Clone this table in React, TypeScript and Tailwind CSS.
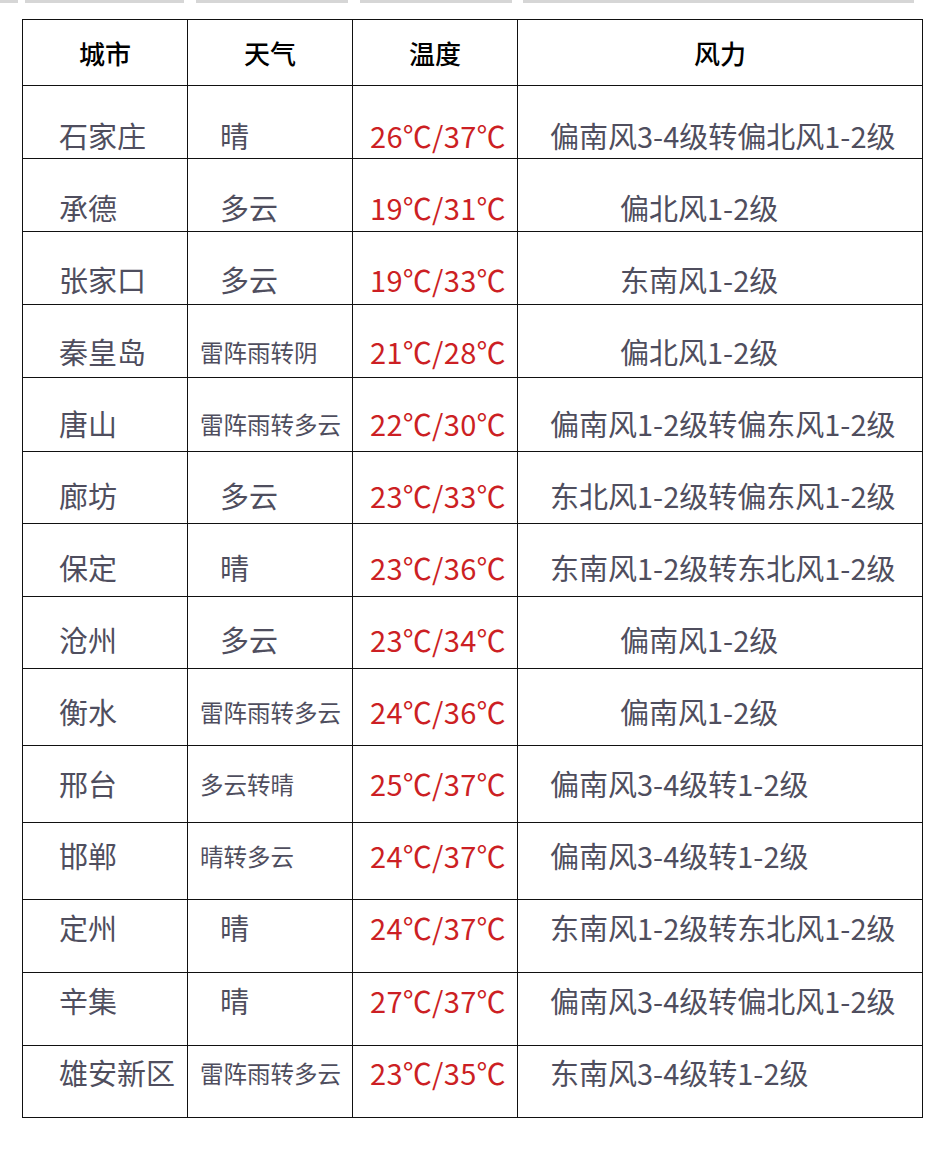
const rows = [
  { city: '石家庄', weather: '晴', temp: '26℃/37℃', wind: '偏南风3-4级转偏北风1-2级', h: 'h-[73px]', pt: 'pt-[35px]' },
  { city: '承德', weather: '多云', temp: '19℃/31℃', wind: '偏北风1-2级', h: 'h-[73px]', pt: 'pt-[34px]' },
  { city: '张家口', weather: '多云', temp: '19℃/33℃', wind: '东南风1-2级', h: 'h-[73px]', pt: 'pt-[33px]' },
  { city: '秦皇岛', weather: '雷阵雨转阴', temp: '21℃/28℃', wind: '偏北风1-2级', h: 'h-[73px]', pt: 'pt-[32px]' },
  { city: '唐山', weather: '雷阵雨转多云', temp: '22℃/30℃', wind: '偏南风1-2级转偏东风1-2级', h: 'h-[74px]', pt: 'pt-[31px]' },
  { city: '廊坊', weather: '多云', temp: '23℃/33℃', wind: '东北风1-2级转偏东风1-2级', h: 'h-[72px]', pt: 'pt-[29px]' },
  { city: '保定', weather: '晴', temp: '23℃/36℃', wind: '东南风1-2级转东北风1-2级', h: 'h-[73px]', pt: 'pt-[29px]' },
  { city: '沧州', weather: '多云', temp: '23℃/34℃', wind: '偏南风1-2级', h: 'h-[72px]', pt: 'pt-[28px]' },
  { city: '衡水', weather: '雷阵雨转多云', temp: '24℃/36℃', wind: '偏南风1-2级', h: 'h-[77px]', pt: 'pt-[28px]' },
  { city: '邢台', weather: '多云转晴', temp: '25℃/37℃', wind: '偏南风3-4级转1-2级', h: 'h-[77px]', pt: 'pt-[23px]' },
  { city: '邯郸', weather: '晴转多云', temp: '24℃/37℃', wind: '偏南风3-4级转1-2级', h: 'h-[77px]', pt: 'pt-[18px]' },
  { city: '定州', weather: '晴', temp: '24℃/37℃', wind: '东南风1-2级转东北风1-2级', h: 'h-[73px]', pt: 'pt-[13px]' },
  { city: '辛集', weather: '晴', temp: '27℃/37℃', wind: '偏南风3-4级转偏北风1-2级', h: 'h-[73px]', pt: 'pt-[13px]' },
  { city: '雄安新区', weather: '雷阵雨转多云', temp: '23℃/35℃', wind: '东南风3-4级转1-2级', h: 'h-[72px]', pt: 'pt-[12px]' },
]

const font = "font-['Noto_Sans_CJK_SC','Noto_Sans',sans-serif]"

export default function App() {
  return (
    <div className={`w-[944px] h-[1150px] bg-white ${font}`}>
      {/* faint strip left over from the image above */}
      <div className="flex h-[3px]">
        <div className="w-[18px] bg-[#d6d6d6]" />
        <div className="ml-[7px] w-[159px] bg-[#d6d6d6]" />
        <div className="ml-[12px] w-[152px] bg-[#d6d6d6]" />
        <div className="ml-[12px] w-[152px] bg-[#d6d6d6]" />
        <div className="ml-[11px] w-[391px] bg-[#d6d6d6]" />
      </div>

      <div className="ml-[22px] mt-[16px] w-[901px] border-l border-t border-[#111]">
        {/* header */}
        <div className="flex h-[66px] text-[26px] font-medium text-black leading-none">
          <div className="w-[165px] border-r border-b border-[#111] flex items-center justify-center">城市</div>
          <div className="w-[165px] border-r border-b border-[#111] flex items-center justify-center">天气</div>
          <div className="w-[165px] border-r border-b border-[#111] flex items-center justify-center">温度</div>
          <div className="w-[405px] border-r border-b border-[#111] flex items-center justify-center">风力</div>
        </div>

        {rows.map((r) => {
          const longWeather = r.weather.length > 2
          const longWind = r.wind.length > 7
          return (
            <div key={r.city} className={`flex ${r.h} leading-none text-[#4f4e5e]`}>
              <div className={`w-[165px] border-r border-b border-[#111] pl-[36px] text-[29px] ${r.pt}`}>
                {r.city}
              </div>
              <div
                className={`w-[165px] border-r border-b border-[#111] ${r.pt} ${
                  longWeather ? 'pl-[12px] text-[23.5px]' : 'pl-[32px] text-[29px]'
                }`}
              >
                <div className={longWeather ? 'mt-[4px]' : ''}>{r.weather}</div>
              </div>
              <div className={`w-[165px] border-r border-b border-[#111] pl-[17px] text-[29px] tracking-[0.3px] text-[#cc1f24] ${r.pt}`}>
                {r.temp}
              </div>
              <div
                className={`w-[405px] border-r border-b border-[#111] text-[29px] whitespace-nowrap ${r.pt} ${
                  longWind ? 'pl-[32px]' : 'pl-[102px]'
                }`}
              >
                {r.wind}
              </div>
            </div>
          )
        })}
      </div>
    </div>
  )
}
